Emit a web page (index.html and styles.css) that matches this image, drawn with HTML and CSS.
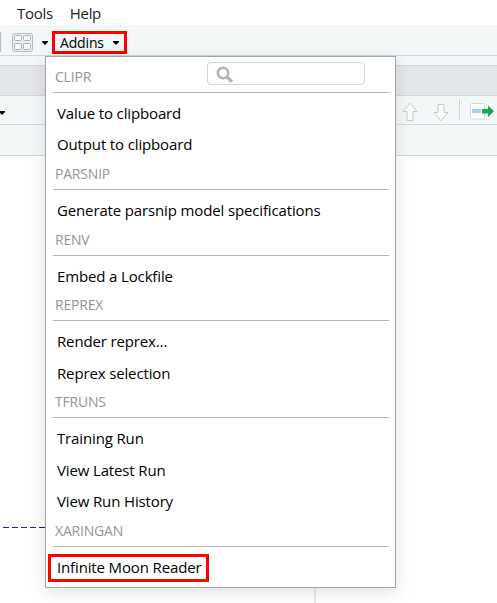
FILE: index.html
```html
<!DOCTYPE html>
<html lang="en">
<head>
<meta charset="utf-8">
<title>Addins</title>
<link rel="stylesheet" href="styles.css">
</head>
<body>
<div class="app">
  <nav class="menubar"><span class="tools">Tools</span><span>Help</span></nav>
  <div class="toolbar">
    <i class="edge"></i>
    <svg class="grid-icon" width="21" height="19" viewBox="0 0 21 19" fill="none" stroke="#b5bcc0"><rect x=".5" y=".5" width="20" height="18" rx="2" fill="#edf0f1"/><g fill="#fafbfb" stroke="#a9b1b5"><rect x="2.5" y="2.5" width="7" height="5" rx="1"/><rect x="11.5" y="2.5" width="7" height="5" rx="1"/><rect x="2.5" y="10.5" width="7" height="6" rx="1"/><rect x="11.5" y="10.5" width="7" height="6" rx="1"/></g></svg>
    <svg class="caret" width="6" height="4" viewBox="0 0 6 4"><path d="M0 0h6v1L3 4 0 1z"/></svg>
    <div class="addins"><span>Addins</span><svg class="caret" width="6" height="4" viewBox="0 0 6 4"><path d="M0 0h6v1L3 4 0 1z"/></svg></div>
  </div>
  <div class="gap"></div>
  <div class="tabs"></div>
  <div class="editor-bar">
    <svg class="left-caret" width="6" height="4" viewBox="0 0 6 4"><path d="M0 0h6v1L3 4 0 1z"/></svg>
    <svg class="arrow" width="16" height="20" viewBox="0 0 16 20"><path d="M8 1.2 15 9.5H11V18.5H5V9.5H1z" fill="#fff" stroke="#c6c9cb"/></svg>
    <svg class="arrow down" width="16" height="20" viewBox="0 0 16 20"><path d="M8 18.8 15 10.5H11V2.5H5V10.5H1z" fill="#fff" stroke="#c6c9cb"/></svg>
    <i class="divider"></i>
    <svg class="run" width="25" height="17" viewBox="0 0 25 17"><rect x=".5" y=".5" width="14" height="15.5" rx="1" fill="#fff" stroke="#d4d8da"/><path d="M2 6h9v4H2z" fill="#a9cbfb"/><path d="M12 6h6V2.5L24 8.2 18 14v-3.5H12z" fill="#12a757"/></svg>
  </div>
  <div class="info-bar"></div>
  <main class="editor"><i class="chunk-line"></i><i class="margin-line"></i></main>

  <div class="popup">
    <label class="search"><svg width="18" height="18" viewBox="0 0 18 18" fill="none" stroke="#adb5ba"><circle cx="7" cy="7" r="5.2" stroke-width="2.6"/><path d="m11 11 5 4.7" stroke-width="3.3"/></svg></label>
    <section><h2>CLIPR</h2><ul><li>Value to clipboard</li><li>Output to clipboard</li></ul></section>
    <section><h2>PARSNIP</h2><ul><li>Generate parsnip model specifications</li></ul></section>
    <section><h2>RENV</h2><ul><li>Embed a Lockfile</li></ul></section>
    <section><h2>REPREX</h2><ul><li>Render reprex...</li><li>Reprex selection</li></ul></section>
    <section><h2>TFRUNS</h2><ul><li>Training Run</li><li>View Latest Run</li><li>View Run History</li></ul></section>
    <section><h2>XARINGAN</h2><ul><li class="marked">Infinite Moon Reader</li></ul></section>
  </div>
</div>
</body>
</html>
```
FILE: styles.css
```css
*, *::before { box-sizing: border-box; }
body { margin: 0; font-family: "Open Sans", "Noto Sans", sans-serif; color: #000; background: #fff; }
svg { display: block; flex: none; }
.app { position: relative; display: flex; flex-direction: column; width: 497px; height: 603px; overflow: hidden; }
.menubar { display: flex; height: 25px; padding-left: 17px; gap: 17px; font-size: 15px; line-height: 27px; letter-spacing: -.3px; color: #222; }
.toolbar { display: flex; align-items: center; height: 31px; padding-top: 4px; background: #f3f7f8; border-bottom: 1px solid #d3d7da; }
.edge { width: 1px; height: 20px; background: #b8bcbf; box-shadow: 0 0 1px #c8cccf; }
.grid-icon { margin-left: 11px; margin-right: 9px; }
.caret { margin-top: 2px; }
.addins { display: flex; align-items: center; width: 75px; height: 23px; margin-left: 4px; margin-top: 1px; padding-left: 5px; border: 3px solid #fe0000; font-size: 14px; letter-spacing: -.15px; line-height: 18px; }
.addins span { width: 53px; }
.addins .caret { margin-top: 1px; }
.gap { height: 10px; background: #f4f6f8; border-bottom: 1px solid #d3d7da; }
.tabs { height: 30px; background: #e5e6e8; border-bottom: 1px solid #d3d7da; }
.editor-bar { display: flex; align-items: center; height: 29px; background: #f3f7f8; border-bottom: 1px solid #d3d7da; }
.left-caret { margin-left: -1px; margin-top: 5px; }
.arrow { margin-left: 397px; margin-top: 4px; }
.arrow.down { margin-left: 15px; }
.divider { width: 1px; height: 20px; margin-left: 10px; margin-right: 10px; background: #cfd2d5; box-shadow: 1px 0 #fff; }
.run { margin-top: 3px; }
.info-bar { height: 31px; background: #f3f7f8; border-bottom: 1px solid #d3d7da; }
.editor { position: relative; flex: 1; }
.chunk-line { position: absolute; left: -6px; top: 371px; width: 52px; height: 1px; background: repeating-linear-gradient(90deg, #2014cf 0 6px, transparent 6px 9px); }
.margin-line { position: absolute; left: 314px; top: 0; width: 2px; height: 100%; background: #e8e8e8; }
.popup { position: absolute; left: 45px; top: 56px; width: 351px; height: 532px; padding: 7px 6px 0 7px; background: #fff; border: 1px solid #a3a4ae; box-shadow: 0 4px 16px rgba(0,0,0,.12); }
.search { position: absolute; left: 161px; top: 5px; width: 158px; height: 23px; padding: 3px 8px; border: 1px solid #d2d6d9; border-radius: 4px; background: #fff; }
h2 { margin: 0; height: 29px; padding-left: 2px; border-bottom: 1px solid #b5b5b7; font-size: 14px; font-weight: 400; line-height: 25px; letter-spacing: -.2px; color: #959597; }
ul { margin: 0; padding: 5px 0 .4px 4px; list-style: none; }
li { height: 31.3px; font-size: 15px; line-height: 31.3px; letter-spacing: -.14px; white-space: nowrap; }
.marked { position: relative; }
.marked::before { content: ""; position: absolute; left: -9px; top: 2px; width: 161px; height: 28px; border: 3px solid #fe0000; }
```
